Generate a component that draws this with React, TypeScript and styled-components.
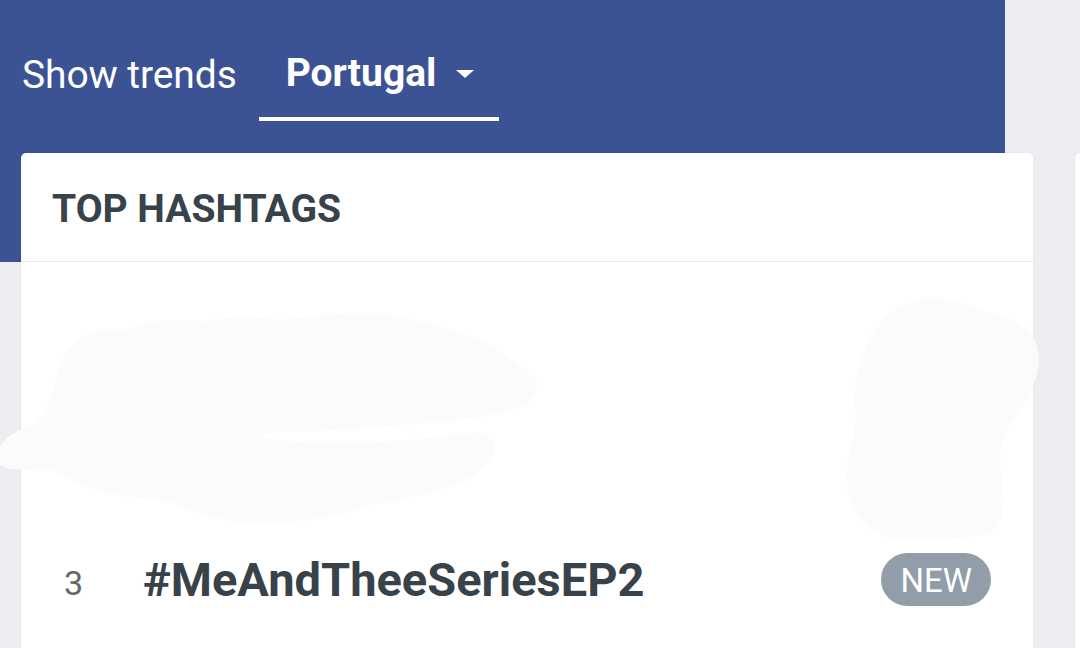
import React from "react";
import styled, { createGlobalStyle } from "styled-components";

const Global = createGlobalStyle`
  html, body {
    margin: 0;
    padding: 0;
    width: 1080px;
    height: 648px;
    overflow: hidden;
    background: #eceef1;
    font-family: Roboto, "Liberation Sans", Arial, sans-serif;
  }
`;

const Page = styled.div`
  width: 1080px;
  height: 648px;
  overflow: hidden;
  background:
    linear-gradient(#3b5295, #3b5295) no-repeat 0 0 / 1005px 262px,
    #eceef1;
`;

const Nav = styled.nav`
  display: flex;
  align-items: flex-start;
  padding: 50px 0 0 22px;
  gap: 22px;
`;

const NavLabel = styled.span`
  margin-top: 2px;
  font-size: 39px;
  line-height: 46px;
  color: #ffffff;
  font-weight: 400;
  letter-spacing: -0.1px;
`;

const Tab = styled.button`
  display: flex;
  align-items: center;
  gap: 20px;
  padding: 0 25px 21px 27px;
  margin: 0;
  background: none;
  border: none;
  border-bottom: 4px solid #ffffff;
  font-family: inherit;
  font-size: 39px;
  line-height: 46px;
  font-weight: 700;
  color: #ffffff;
  cursor: pointer;
`;

const Caret = styled.span`
  width: 0;
  height: 0;
  margin-top: 2px;
  border-left: 9px solid transparent;
  border-right: 9px solid transparent;
  border-top: 8px solid #ffffff;
`;

const Cards = styled.div`
  display: flex;
  gap: 42px;
  margin: 32px 0 0 21px;
  align-items: flex-start;
`;

const Card = styled.section<{ $w: number }>`
  flex: none;
  width: ${(p) => p.$w}px;
  background: #ffffff;
  border-radius: 5px 5px 0 0;
  box-shadow: 0 0 2px rgba(0, 0, 0, 0.08);
  min-height: 500px;
`;

const CardHeader = styled.header`
  height: 108px;
  box-sizing: content-box;
  padding: 0;
  border-bottom: 1px solid #e7e9ec;
  display: flex;
  align-items: flex-start;
`;

const CardTitle = styled.h2`
  margin: 33px 0 0 31px;
  font-size: 39px;
  line-height: 46px;
  font-weight: 700;
  color: #37424a;
  letter-spacing: 0;
`;

const Redacted = styled.svg`
  display: block;
  overflow: visible;
`;

const Row = styled.div`
  display: flex;
  align-items: center;
  height: 53px;
  padding: 0 42px 0 43px;
`;

const Rank = styled.span`
  width: 79px;
  padding-top: 6px;
  font-size: 34px;
  line-height: 40px;
  color: #5d6870;
`;

const Tag = styled.span`
  flex: 1;
  font-size: 47px;
  line-height: 56px;
  font-weight: 700;
  color: #37424a;
`;

const Pill = styled.span`
  height: 53px;
  box-sizing: border-box;
  padding: 2px 19px 0;
  border-radius: 27px;
  background: #919eaa;
  color: #ffffff;
  font-size: 33px;
  line-height: 51px;
`;

const blobFill = "#fbfbfb";

export default function App() {
  return (
    <Page>
      <Global />
      <Nav>
        <NavLabel>Show trends</NavLabel>
        <Tab>
          Portugal
          <Caret />
        </Tab>
      </Nav>
      <Cards>
        <Card $w={1012}>
          <CardHeader>
            <CardTitle>TOP HASHTAGS</CardTitle>
          </CardHeader>
          <Redacted width="1012" height="291" viewBox="21 262 1012 291">
            <path
              fill={blobFill}
              d="M62 360 C70 335 95 328 120 332 C150 320 175 318 205 322 C240 312 270 322 300 318 C340 314 370 308 420 322 C470 330 505 352 535 378 C545 400 520 412 470 418 C420 424 350 430 290 432 C250 432 250 438 300 442 C360 446 420 440 480 432 C505 440 495 465 470 478 C440 492 400 500 370 505 C330 520 270 528 225 520 C190 512 180 500 140 498 C100 494 70 480 50 468 C30 470 10 472 0 465 C-8 450 5 432 35 425 C50 410 55 385 62 360 Z"
            />
            <path
              fill={blobFill}
              d="M872 335 C885 312 905 300 935 298 C960 300 985 315 1010 318 C1035 330 1045 350 1035 380 C1025 410 1005 425 1000 450 C1000 480 1010 510 995 530 C975 540 940 538 910 540 C875 540 855 520 848 490 C842 460 858 440 855 410 C852 380 862 355 872 335 Z"
            />
          </Redacted>
          <Row>
            <Rank>3</Rank>
            <Tag>#MeAndTheeSeriesEP2</Tag>
            <Pill>NEW</Pill>
          </Row>
        </Card>
        <Card $w={300} />
      </Cards>
    </Page>
  );
}
